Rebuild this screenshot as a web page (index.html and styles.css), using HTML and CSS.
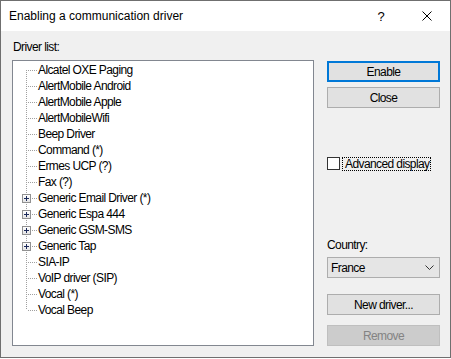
FILE: index.html
```html
<!DOCTYPE html>
<html lang="en">
<head>
    <meta charset="UTF-8">
    <meta name="viewport" content="width=device-width, initial-scale=1.0">
    <title>Enabling a communication driver</title>
    <link rel="stylesheet" href="styles.css">
</head>
<body>
    <div class="dialog">
        <div class="titlebar">
            <span class="title">Enabling a communication driver</span>
            <span class="title-btn help">?</span>
            <span class="title-btn close">
                <svg width="10" height="10" viewBox="0 0 10 10">
                    <path d="M0.5 0.5 L9.5 9.5 M9.5 0.5 L0.5 9.5" stroke="#000" stroke-width="1" fill="none"/>
                </svg>
            </span>
        </div>
        <div class="content">
            <div class="left-col">
                <div class="label">Driver list:</div>
                <div class="tree">
                    <div class="node">Alcatel OXE Paging</div>
                    <div class="node">AlertMobile Android</div>
                    <div class="node">AlertMobile Apple</div>
                    <div class="node">AlertMobileWifi</div>
                    <div class="node">Beep Driver</div>
                    <div class="node">Command (*)</div>
                    <div class="node">Ermes UCP (?)</div>
                    <div class="node">Fax (?)</div>
                    <div class="node"><span class="expander"></span>Generic Email Driver (*)</div>
                    <div class="node"><span class="expander"></span>Generic Espa 444</div>
                    <div class="node"><span class="expander"></span>Generic GSM-SMS</div>
                    <div class="node"><span class="expander"></span>Generic Tap</div>
                    <div class="node">SIA-IP</div>
                    <div class="node">VoIP driver (SIP)</div>
                    <div class="node">Vocal (*)</div>
                    <div class="node">Vocal Beep</div>
                </div>
            </div>
            <div class="right-col">
                <button class="btn btn-default">Enable</button>
                <button class="btn btn-close">Close</button>
                <div class="check-row">
                    <span class="checkbox"></span>
                    <span class="check-label">Advanced display</span>
                </div>
                <div class="label country-label">Country:</div>
                <div class="combo">
                    <span>France</span>
                    <svg width="9" height="5" viewBox="0 0 9 5">
                        <path d="M0.5 0.5 L4.5 4.5 L8.5 0.5" stroke="#333" stroke-width="1" fill="none"/>
                    </svg>
                </div>
                <button class="btn btn-new">New driver...</button>
                <button class="btn btn-remove" disabled>Remove</button>
            </div>
        </div>
    </div>
</body>
</html>
```

FILE: styles.css
```css
body {
    margin: 0;
    background: #ffffff;
    font-family: "Liberation Sans", Arial, sans-serif;
    font-size: 12px;
    color: #000;
}
.dialog {
    width: 451px;
    height: 358px;
    box-sizing: border-box;
    border: 1px solid #6f6f6f;
    background: #f0f0f0;
    display: flex;
    flex-direction: column;
}
.titlebar {
    height: 30px;
    background: #ffffff;
    display: flex;
    align-items: center;
    flex-shrink: 0;
}
.title {
    flex: 1;
    padding-left: 8px;
    line-height: 16px;
}
.title-btn {
    width: 46px;
    height: 30px;
    display: flex;
    align-items: center;
    justify-content: center;
}
.help {
    font-size: 13px;
}
.content {
    display: flex;
    padding: 8px 0 0 11px;
    letter-spacing: -0.6px;
}
.label {
    line-height: 16px;
    padding-left: 1px;
}
.left-col .label {
    margin-bottom: 5px;
}
.tree {
    width: 302px;
    height: 286px;
    box-sizing: border-box;
    border: 1px solid #828790;
    background: #ffffff;
    padding-top: 1px;
}
.node {
    position: relative;
    height: 16px;
    line-height: 16px;
    padding-left: 25px;
    white-space: nowrap;
}
.node::before {
    content: "";
    position: absolute;
    left: 13px;
    top: 0;
    bottom: 0;
    width: 1px;
    background: repeating-linear-gradient(to bottom, #a0a0a0 0 1px, transparent 1px 2px);
}
.node:first-child::before {
    top: 8px;
}
.node:last-child::before {
    bottom: 8px;
}
.node::after {
    content: "";
    position: absolute;
    left: 14px;
    top: 8px;
    width: 10px;
    height: 1px;
    background: repeating-linear-gradient(to right, transparent 0 1px, #a0a0a0 1px 2px);
}
.expander {
    position: absolute;
    left: 9px;
    top: 4px;
    width: 9px;
    height: 9px;
    box-sizing: border-box;
    border: 1px solid #919191;
    background: linear-gradient(#ffffff, #e4e4e4);
    z-index: 1;
}
.expander::before,
.expander::after {
    content: "";
    position: absolute;
    background: #1c2a5a;
}
.expander::before {
    left: 1px;
    top: 3px;
    width: 5px;
    height: 1px;
}
.expander::after {
    left: 3px;
    top: 1px;
    width: 1px;
    height: 5px;
}
.right-col {
    display: flex;
    flex-direction: column;
    margin-left: 13px;
    width: 113px;
}
.btn {
    display: block;
    width: 113px;
    height: 21px;
    box-sizing: border-box;
    border: 1px solid #adadad;
    background: #e1e1e1;
    font-family: "Liberation Sans", Arial, sans-serif;
    font-size: 12px;
    letter-spacing: -0.6px;
    color: #000;
    padding: 0;
    line-height: 18px;
}
.btn-default {
    margin-top: 22px;
    border: 2px solid #0078d7;
}
.btn-close {
    margin-top: 5px;
}
.check-row {
    margin-top: 49px;
    display: flex;
    align-items: flex-start;
    height: 14px;
}
.checkbox {
    flex-shrink: 0;
    width: 13px;
    height: 13px;
    box-sizing: border-box;
    border: 1px solid #333333;
    background: #ffffff;
}
.check-label {
    margin-left: 2px;
    height: 14px;
    line-height: 13px;
    padding: 0 1px 0 2px;
    box-sizing: border-box;
    border: 1px dotted #000;
    white-space: nowrap;
}
.country-label {
    margin-top: 66px;
    padding-left: 0;
}
.combo {
    margin-top: 4px;
    height: 21px;
    box-sizing: border-box;
    border: 1px solid #adadad;
    background: #e5e5e5;
    display: flex;
    align-items: center;
    justify-content: space-between;
    padding: 0 5px 0 3px;
}
.btn-new {
    margin-top: 16px;
}
.btn-remove {
    margin-top: 10px;
    background: #cccccc;
    border-color: #bfbfbf;
    color: #838383;
}
```
